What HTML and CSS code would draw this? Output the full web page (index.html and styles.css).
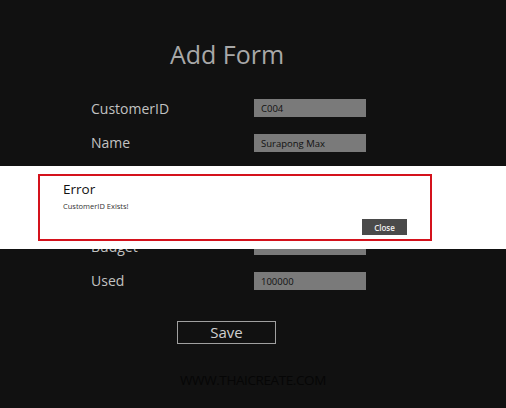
FILE: index.html
```html
<!DOCTYPE html>
<html>
<head>
  <meta charset="UTF-8">
  <title>Add Form</title>
  <link rel="stylesheet" href="styles.css">
</head>
<body>
  <div class="page">
    <h1 class="title">Add Form</h1>
    <div class="form">
      <div class="row">
        <span class="label">CustomerID</span>
        <div class="field">C004</div>
      </div>
      <div class="row">
        <span class="label">Name</span>
        <div class="field">Surapong Max</div>
      </div>
      <div class="row">
        <span class="label"></span>
        <div class="field wide"></div>
      </div>
      <div class="row">
        <span class="label"></span>
        <div class="field"></div>
      </div>
      <div class="row">
        <span class="label">Budget</span>
        <div class="field"></div>
      </div>
      <div class="row">
        <span class="label">Used</span>
        <div class="field">100000</div>
      </div>
    </div>
    <button class="save-button">Save</button>
    <div class="footer">WWW.THAICREATE.COM</div>
  </div>

  <div class="dialog-band">
    <div class="dialog">
      <div class="dialog-title">Error</div>
      <div class="dialog-message">CustomerID Exists!</div>
      <div class="dialog-actions">
        <button class="close-button">Close</button>
      </div>
    </div>
  </div>
</body>
</html>
```

FILE: styles.css
```css
body {
  margin: 0;
  width: 506px;
  height: 408px;
  overflow: hidden;
  background-color: #111111;
  font-family: "Open Sans", "Noto Sans", sans-serif;
  position: relative;
}
.page {
  padding: 37px 0 0 91px;
}
.title {
  width: 272px;
  margin: 0;
  text-align: center;
  font-size: 25px;
  font-weight: normal;
  color: #a8a8a8;
  line-height: 34px;
}
.form {
  margin-top: 28px;
  display: flex;
  flex-direction: column;
  gap: 16.6px;
}
.row {
  display: flex;
  align-items: center;
  height: 18px;
}
.label {
  width: 163px;
  font-size: 14px;
  color: #c2c2c2;
}
.field {
  width: 112px;
  height: 18px;
  box-sizing: border-box;
  padding: 2px 7px 0;
  background-color: #7a7a7a;
  color: #111111;
  font-size: 9.5px;
  line-height: 16px;
  white-space: nowrap;
  overflow: hidden;
}
.field.wide {
  width: 161px;
}
.save-button {
  display: block;
  margin: 31px 0 0 86px;
  width: 99px;
  height: 23px;
  padding: 0;
  background: transparent;
  border: 1px solid #a0a0a0;
  color: #d0d0d0;
  font-family: inherit;
  font-size: 15px;
  line-height: 20px;
}
.footer {
  margin: 27px 0 0 89px;
  font-size: 13.5px;
  letter-spacing: -0.4px;
  color: #060606;
}
.dialog-band {
  position: absolute;
  left: 0;
  top: 166px;
  width: 506px;
  height: 83px;
  background-color: #ffffff;
  padding-top: 8px;
  box-sizing: border-box;
}
.dialog {
  margin-left: 38px;
  width: 394px;
  height: 67px;
  box-sizing: border-box;
  border: 2px solid #d4121c;
  padding: 3px 23px 0 23px;
}
.dialog-title {
  font-size: 13.5px;
  color: #111111;
  line-height: 20px;
}
.dialog-message {
  font-size: 7.5px;
  color: #333333;
  margin-top: 2px;
}
.dialog-actions {
  display: flex;
  justify-content: flex-end;
  margin-top: 8px;
}
.close-button {
  width: 45px;
  height: 16px;
  padding: 0;
  border: none;
  background-color: #4a4a4a;
  color: #f0f0f0;
  font-family: inherit;
  font-size: 8px;
  font-weight: 600;
}
```
